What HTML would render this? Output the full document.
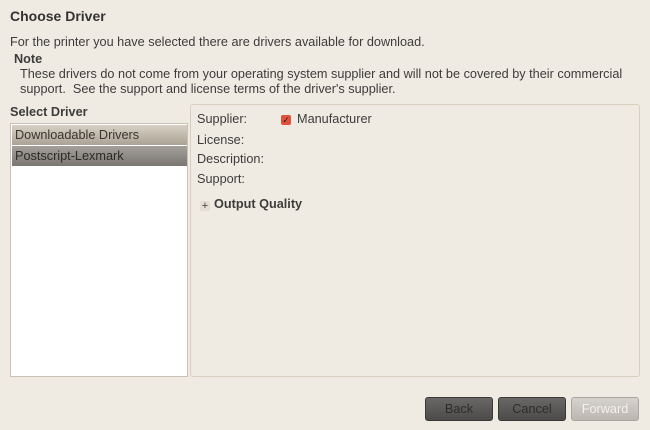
<!DOCTYPE html>
<html><head><style>
body{margin:0;width:650px;height:430px;background:#f0ebe2;font-family:"Liberation Sans",sans-serif;font-size:12.7px;color:#3c3c3c;position:relative;overflow:hidden}
.a{position:absolute;white-space:nowrap}
.btn{position:absolute;top:397px;height:22px;border-radius:3px;background:linear-gradient(#6a6866,#4d4b49);border:1px solid #3a3836;color:#2e2c2a;text-align:center;line-height:22px;font-size:12.7px}
</style></head><body>
<div class="a" style="left:10px;top:8px;font-size:14px;font-weight:bold;color:#333">Choose Driver</div>
<div class="a" style="left:10px;top:35px">For the printer you have selected there are drivers available for download.</div>
<div class="a" style="left:14px;top:52px;font-weight:bold">Note</div>
<div class="a" style="left:20px;top:67px;line-height:15px">These drivers do not come from your operating system supplier and will not be covered by their commercial<br>support.&nbsp; See the support and license terms of the driver's supplier.</div>
<div class="a" style="left:10px;top:105px;font-weight:bold">Select Driver</div>
<div class="a" style="left:10px;top:123px;width:176px;height:252px;background:#fff;border:1px solid #c9c1b3"></div>
<div class="a" style="left:12px;top:125px;width:175px;height:20px;background:linear-gradient(#d8d0c4,#aba295);line-height:20px;padding-left:3px;box-sizing:border-box;color:#3a3530">Downloadable Drivers</div>
<div class="a" style="left:12px;top:146px;width:175px;height:20px;background:linear-gradient(#a3a09c,#7a7672);line-height:20px;padding-left:3px;box-sizing:border-box;color:#2c2a28">Postscript-Lexmark</div>
<div class="a" style="left:190px;top:104px;width:448px;height:271px;border:1px solid #d8cfbf;border-radius:3px"></div>
<div class="a" style="left:197px;top:112px">Supplier:</div>
<div class="a" style="left:281px;top:115px;width:10px;height:10px;background:#e0513a;border-radius:2px;color:#222;font-size:9px;line-height:10px;text-align:center">✓</div>
<div class="a" style="left:297px;top:112px">Manufacturer</div>
<div class="a" style="left:197px;top:133px">License:</div>
<div class="a" style="left:197px;top:152px">Description:</div>
<div class="a" style="left:197px;top:172px">Support:</div>
<div class="a" style="left:200px;top:201px;width:10px;height:10px;background:#e3ddd2;border-radius:2px;font-size:11px;line-height:10px;text-align:center">+</div>
<div class="a" style="left:214px;top:197px;font-weight:bold">Output Quality</div>
<div class="btn" style="left:425px;width:66px">Back</div>
<div class="btn" style="left:498px;width:66px">Cancel</div>
<div class="btn" style="left:571px;width:66px;background:linear-gradient(#d6d2cc,#bbb6b0);border-color:#aaa6a0;color:#f4f2ee">Forward</div>
</body></html>
